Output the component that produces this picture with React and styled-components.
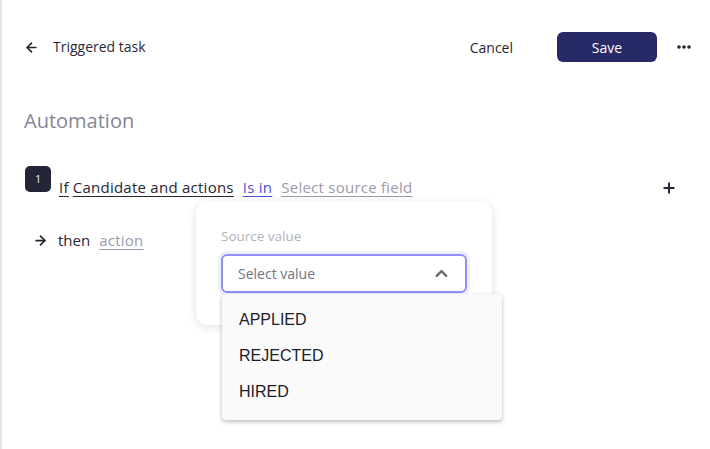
import React from 'react';
import styled, { createGlobalStyle } from 'styled-components';
import { ArrowLeft, ArrowRight, Plus, ChevronUp } from 'lucide-react';

const GlobalStyle = createGlobalStyle`
  body {
    margin: 0;
    background: #ffffff;
    font-family: 'Open Sans', 'Noto Sans', sans-serif;
    color: #262633;
  }
`;

const statuses = ['APPLIED', 'REJECTED', 'HIRED'];

const App = () => {
  return (
    <>
      <GlobalStyle />
      <Page>
        <Header>
          <BackButton>
            <ArrowLeft size={15} strokeWidth={2.6} />
          </BackButton>
          <Title>Triggered task</Title>
          <Spacer />
          <CancelButton>Cancel</CancelButton>
          <SaveButton>Save</SaveButton>
          <MoreButton>
            <svg width="14" height="4" viewBox="0 0 14 4">
              <circle cx="2" cy="2" r="1.8" fill="#262633" />
              <circle cx="7" cy="2" r="1.8" fill="#262633" />
              <circle cx="12" cy="2" r="1.8" fill="#262633" />
            </svg>
          </MoreButton>
        </Header>

        <SectionTitle>Automation</SectionTitle>

        <Rule>
          <ConditionRow>
            <StepBadge>1</StepBadge>
            <Condition>
              <Token $tight>If</Token>
              <Token>Candidate and actions</Token>
              <Token $tone="blue">Is in</Token>
              <Token $tone="muted">Select source field</Token>
            </Condition>
            <AddButton>
              <Plus size={16} strokeWidth={3} />
            </AddButton>
          </ConditionRow>

          <ActionRow>
            <ArrowRight size={15} strokeWidth={2.8} />
            <ThenLabel>then</ThenLabel>
            <Token $tone="muted">action</Token>
          </ActionRow>

          <Popover>
            <FieldLabel>Source value</FieldLabel>
            <SelectBox>
              <span>Select value</span>
              <ChevronUp size={19} strokeWidth={3} color="#6b6b73" />
            </SelectBox>
          </Popover>

          <Menu>
            {statuses.map((s) => (
              <MenuItem key={s}>{s}</MenuItem>
            ))}
          </Menu>
        </Rule>
      </Page>
    </>
  );
};

export default App;

const Page = styled.div`
  min-height: 449px;
  box-sizing: border-box;
  border-left: 2px solid #e3e4ea;
  padding: 32px 19px 0 22px;
`;

const Header = styled.div`
  display: flex;
  align-items: center;
  height: 30px;
`;

const BackButton = styled.div`
  display: flex;
  align-items: center;
  color: #262633;
  margin-right: 14px;
`;

const Title = styled.div`
  font-size: 14px;
  color: #2a2a38;
  padding-bottom: 2px;
`;

const Spacer = styled.div`
  flex: 1;
`;

const CancelButton = styled.button`
  border: 0;
  background: transparent;
  font-family: inherit;
  font-size: 14px;
  color: #262633;
  padding: 0;
  margin-right: 44px;
  cursor: pointer;
`;

const SaveButton = styled.button`
  width: 100px;
  height: 30px;
  border: 0;
  border-radius: 6px;
  background: #272a66;
  color: #ffffff;
  font-family: inherit;
  font-size: 14px;
  cursor: pointer;
`;

const MoreButton = styled.div`
  display: flex;
  align-items: center;
  margin-left: 20px;
`;

const SectionTitle = styled.h2`
  margin: 45px 0 0 0;
  font-size: 20px;
  font-weight: 400;
  color: #858597;
  line-height: 27px;
`;

const Rule = styled.div`
  position: relative;
  margin-top: 32px;
`;

const ConditionRow = styled.div`
  display: flex;
  align-items: flex-start;
`;

const StepBadge = styled.div`
  width: 26px;
  height: 26px;
  border-radius: 5px;
  background: #242536;
  color: #ffffff;
  font-size: 10px;
  display: flex;
  align-items: center;
  justify-content: center;
  margin-left: 1px;
`;

const Condition = styled.div`
  display: flex;
  gap: 9px;
  padding-top: 11px;
  margin-left: 8px;
  flex: 1;
`;

const Token = styled.span`
  font-size: 15px;
  line-height: 20px;
  letter-spacing: 0.25px;
  text-decoration: underline;
  text-underline-offset: 3px;
  margin-right: ${(p) => (p.$tight ? '-5px' : '0')};
  color: ${(p) => (p.$tone === 'blue' ? '#4b50d8' : p.$tone === 'muted' ? '#9c9aae' : '#262633')};
  cursor: pointer;
`;

const AddButton = styled.div`
  display: flex;
  color: #262633;
  padding-top: 14px;
  margin-right: 14px;
`;

const ActionRow = styled.div`
  display: flex;
  align-items: center;
  gap: 9px;
  margin-top: 33px;
  padding-left: 9px;
  color: #262633;
`;

const ThenLabel = styled.span`
  font-size: 15px;
  line-height: 20px;
  margin-left: 1px;
`;

const Popover = styled.div`
  position: absolute;
  left: 172px;
  top: 35px;
  width: 296px;
  height: 124px;
  box-sizing: border-box;
  padding: 27px 25px 0 25px;
  background: #ffffff;
  border-radius: 12px;
  box-shadow: 0 2px 10px rgba(20, 20, 40, 0.12);
`;

const FieldLabel = styled.div`
  font-size: 13.5px;
  line-height: 16px;
  color: #b2b1bd;
`;

const SelectBox = styled.div`
  margin-top: 10px;
  height: 39px;
  box-sizing: border-box;
  border: 2px solid #8f8ff4;
  border-radius: 6px;
  box-shadow: 0 0 0 3px #efeffc;
  display: flex;
  align-items: center;
  justify-content: space-between;
  padding: 0 14px 0 15px;
  font-size: 14px;
  color: #74737f;
`;

const Menu = styled.div`
  position: absolute;
  left: 198px;
  top: 128px;
  width: 280px;
  box-sizing: border-box;
  padding: 8px 0 10px 0;
  background: #fafafa;
  border-radius: 4px;
  box-shadow: 0 2px 4px rgba(0, 0, 0, 0.25), 0 0 1px rgba(0, 0, 0, 0.15);
`;

const MenuItem = styled.div`
  height: 36px;
  display: flex;
  align-items: center;
  padding-left: 17px;
  font-family: 'Liberation Sans', Arial, sans-serif;
  font-size: 16px;
  color: #1c1c28;
  cursor: pointer;
`;
